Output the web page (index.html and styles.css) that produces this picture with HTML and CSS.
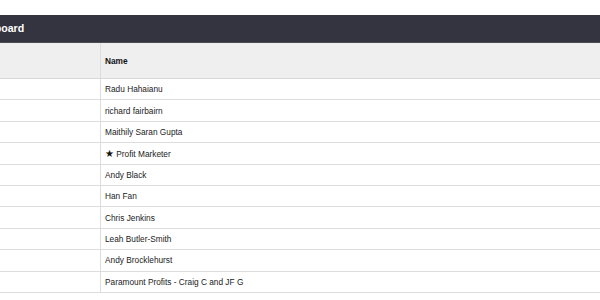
FILE: index.html
```html
<!DOCTYPE html>
<html>
<head>
<meta charset="utf-8">
<link rel="stylesheet" href="styles.css">
</head>
<body>
<div class="page">
  <div class="panel">
    <div class="panel-head">Leaderboard</div>
    <table class="board">
      <thead>
        <tr><th class="rank"></th><th class="name">Name</th></tr>
      </thead>
      <tbody>
        <tr><td class="rank"></td><td>Radu Hahaianu</td></tr>
        <tr><td class="rank"></td><td>richard fairbairn</td></tr>
        <tr><td class="rank"></td><td>Maithily Saran Gupta</td></tr>
        <tr><td class="rank"></td><td><span class="star">★</span> Profit Marketer</td></tr>
        <tr><td class="rank"></td><td>Andy Black</td></tr>
        <tr><td class="rank"></td><td>Han Fan</td></tr>
        <tr><td class="rank"></td><td>Chris Jenkins</td></tr>
        <tr><td class="rank"></td><td>Leah Butler-Smith</td></tr>
        <tr><td class="rank"></td><td>Andy Brocklehurst</td></tr>
        <tr><td class="rank"></td><td>Paramount Profits - Craig C and JF G</td></tr>
      </tbody>
    </table>
  </div>
</div>
</body>
</html>
```
FILE: styles.css
```css
html, body {
  margin: 0;
  padding: 0;
  background: #ffffff;
  overflow: hidden;
}
.page {
  padding-top: 15px;
  margin-left: -50px;
  width: 720px;
  font-family: "Liberation Sans", Arial, sans-serif;
}
.panel-head {
  background: #33343f;
  color: #ffffff;
  font-weight: bold;
  font-size: 10.6px;
  height: 27px;
  line-height: 27px;
  padding-left: 10px;
  border-bottom: 1px solid #4a4b55;
}
.board {
  width: 100%;
  border-collapse: collapse;
  font-size: 8.3px;
  color: #222222;
}
.board th,
.board td {
  text-align: left;
  padding: 0 4px;
  border-bottom: 1px solid #dddddd;
}
.board .rank {
  width: 142px;
  border-right: 1px solid #dddddd;
}
.board thead th {
  background: #efefef;
  height: 35px;
  font-weight: bold;
  color: #111111;
  border-bottom: 1px solid #d8d8d8;
}
.board tbody td {
  height: 20.4px;
}
.star {
  font-size: 9.5px;
  color: #111111;
}
```
